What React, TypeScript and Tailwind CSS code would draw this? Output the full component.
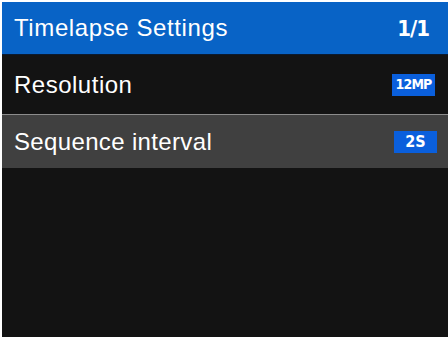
export default function App() {
  return (
    <div className="w-[448px] h-[337px] bg-white pl-[2px] pt-[2px] overflow-hidden">
      <div className="flex flex-col h-full bg-[#131313] font-['Liberation_Sans',Arial,sans-serif] text-white">
        {/* Header */}
        <div className="flex items-center justify-between h-[53px] bg-[#0863c6] pl-[12px] pr-[19px] border-b border-[#0a1a30]">
          <span className="text-[24px] tracking-[0.6px]">Timelapse Settings</span>
          <span className="text-[22px] font-['DejaVu_Sans_Condensed',sans-serif] font-semibold tracking-[-1px]">1/1</span>
        </div>

        {/* Resolution */}
        <div className="flex items-center justify-between h-[59px] pl-[12px] pr-[13px]">
          <span className="text-[24px] tracking-[0.5px]">Resolution</span>
          <span className="bg-[#0a5fdc] h-[22px] w-[43px] flex items-center justify-center text-[14px] font-bold font-['DejaVu_Sans_Condensed',sans-serif] tracking-[-0.8px]">
            12MP
          </span>
        </div>

        {/* Sequence interval (selected) */}
        <div className="flex items-center justify-between h-[54px] bg-[#404040] border-t border-[#8c8c8c] pl-[12px] pr-[11px]">
          <span className="text-[24px] tracking-[0.35px]">Sequence interval</span>
          <span className="bg-[#0a5fdc] h-[22px] w-[43px] flex items-center justify-center text-[16px] font-bold font-['DejaVu_Sans_Condensed',sans-serif]">
            2S
          </span>
        </div>

        <div className="flex-1" />
      </div>
    </div>
  );
}
